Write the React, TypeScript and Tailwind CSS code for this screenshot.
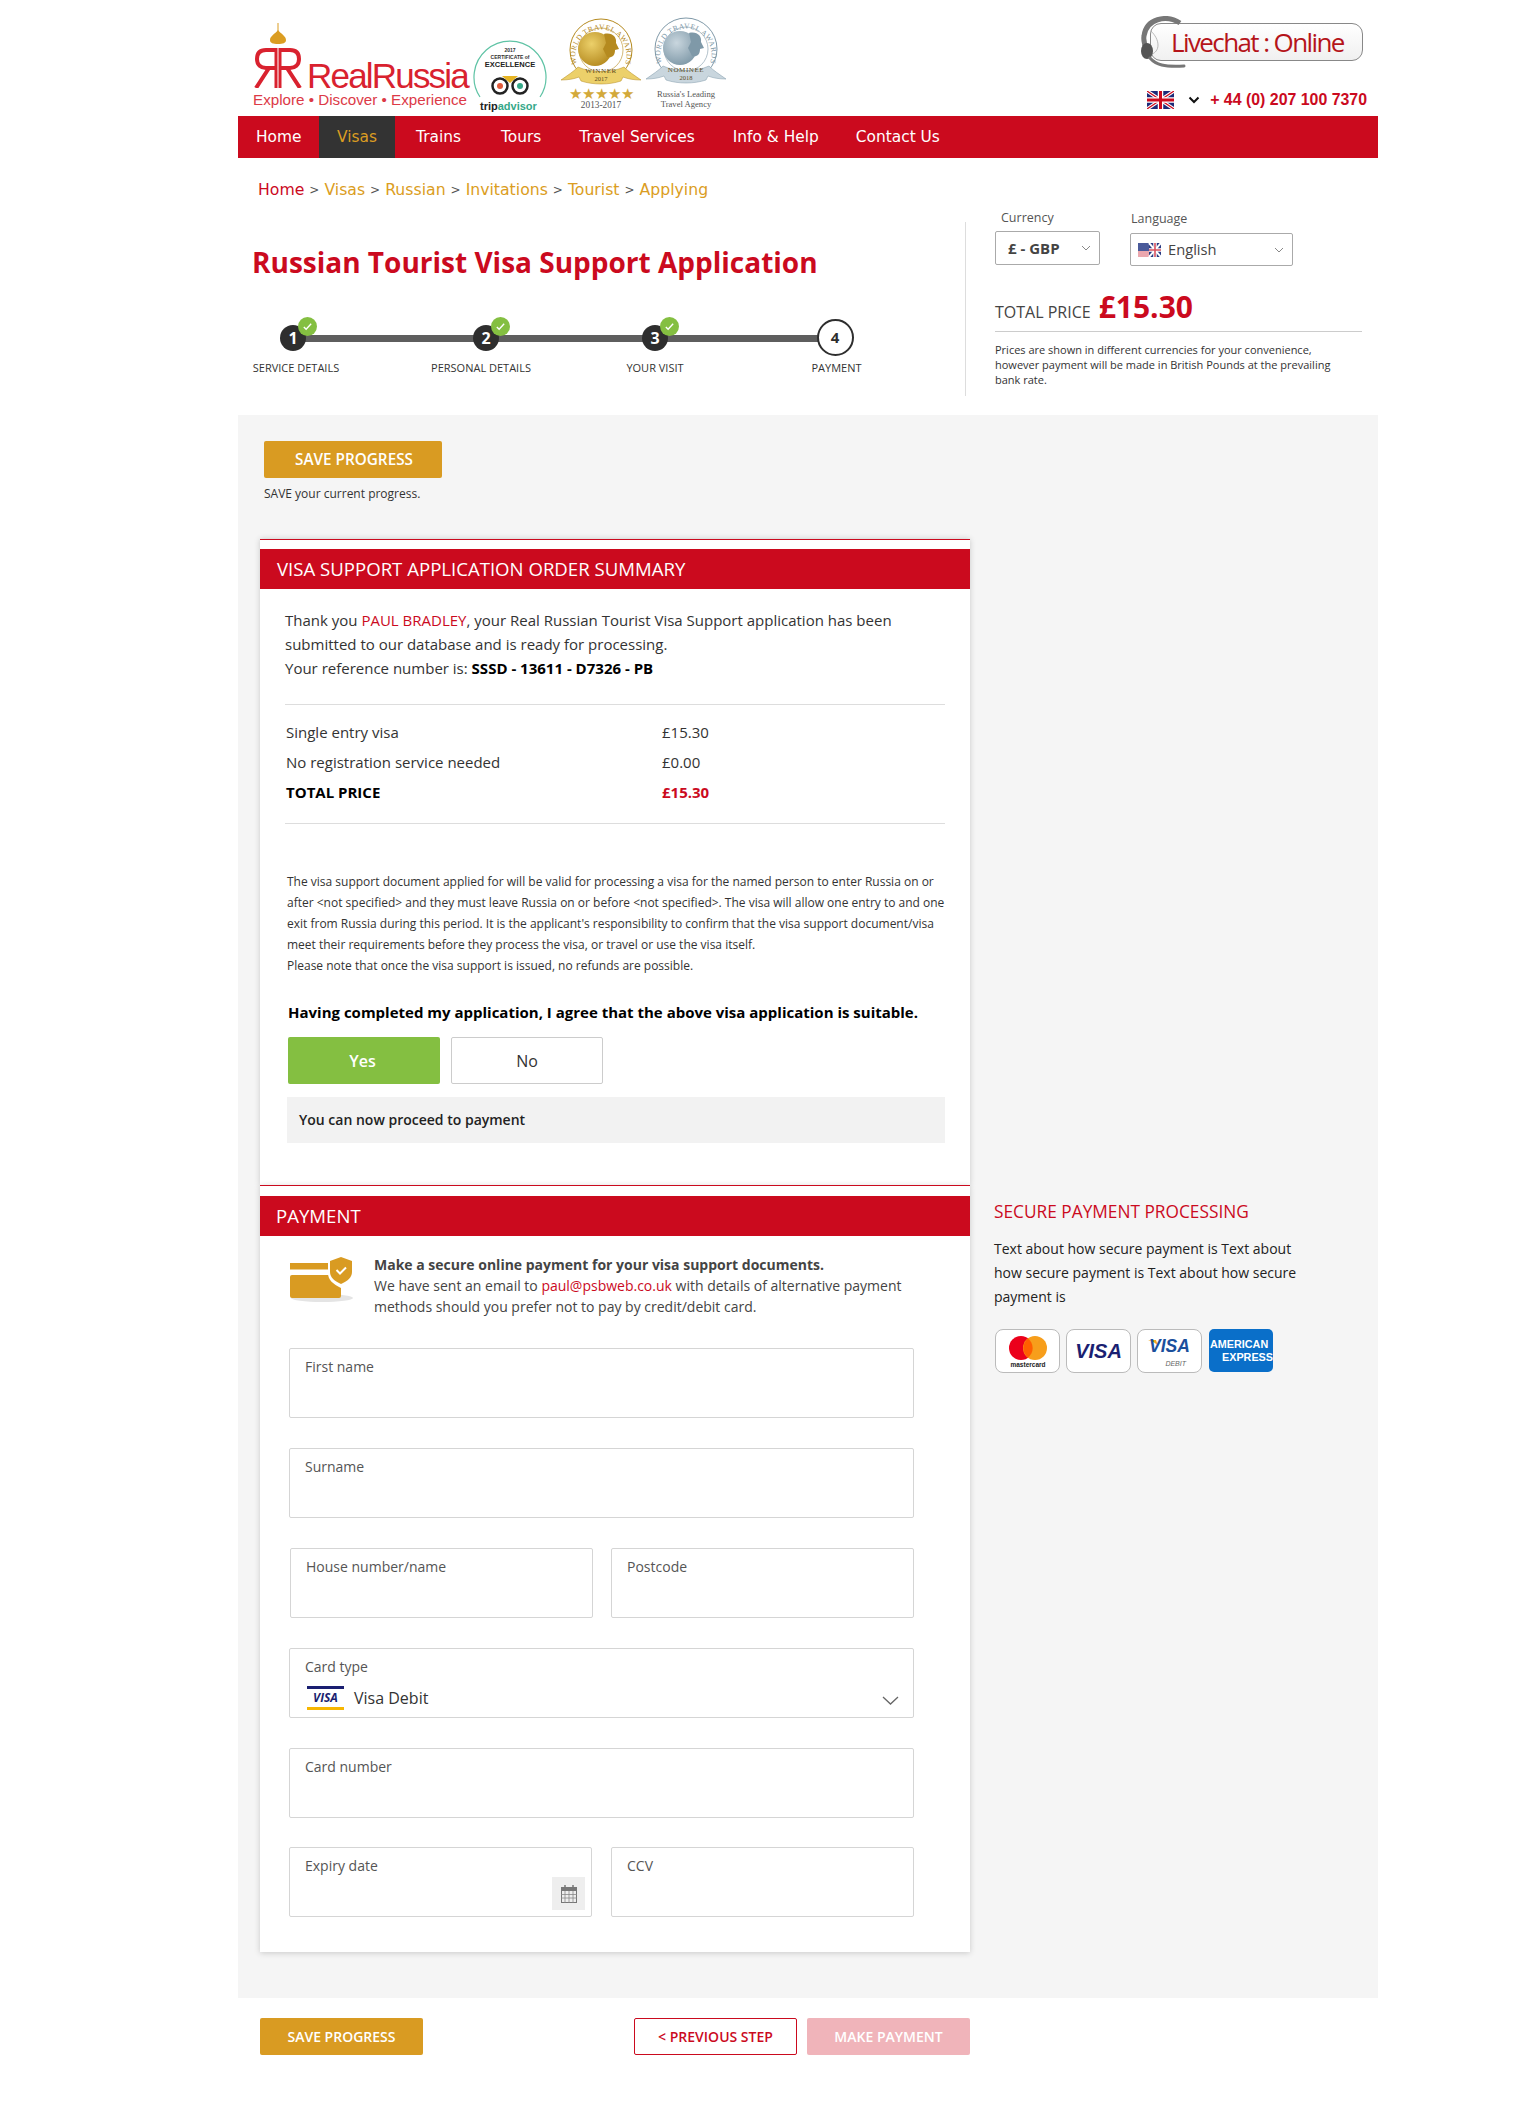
import type { ReactNode } from "react";

const Field = ({ label, className }: { label: string; className?: string }) => (
  <div className={"h-[70px] rounded-[2px] border border-[#d5d5d5] bg-white px-[15px] pt-[8px] text-[14px] leading-[20px] text-[#555] " + (className || "")}>
    {label}
  </div>
);

const Logo = () => (
  <div className="relative h-[110px] w-[216px]">
    <svg viewBox="0 0 50 65" className="absolute left-[1px] top-[23px] h-[65px] w-[50px]">
      <path d="M25 0v9" stroke="#db9d22" strokeWidth="1" />
      <path d="M25 7c3 4 8 6 8 10 0 3-3 4-8 4s-8-1-8-4c0-4 5-6 8-10z" fill="#db9d22" />
      <g fill="none" stroke="#d9222f" strokeWidth="4">
        <path d="M23 27H13C6 27 4 31 4 36c0 6 4 9 9 9h10" />
        <path d="M27 27h10c7 0 9 4 9 9 0 6-4 9-9 9H27" />
        <path d="M16 45L3 65M34 45l13 20" />
      </g>
      <path d="M23 25V65M27 25V65" stroke="#d9222f" strokeWidth="3" />
    </svg>
    <div className="absolute left-[55px] top-[57px] whitespace-nowrap font-['Liberation_Sans',sans-serif] text-[35px] leading-[38px] tracking-[-1.8px] text-[#d9222f]">RealRussia</div>
    <div className="absolute left-[1px] top-[91px] whitespace-nowrap font-['Liberation_Sans',sans-serif] text-[15.2px] leading-[17px] text-[#dc3a47]">Explore • Discover • Experience</div>
  </div>
);

const Tripadvisor = () => (
  <div className="relative h-[76px] w-[74px]">
    <svg viewBox="0 0 74 76" className="absolute inset-0">
      <path d="M7 58A36 36 0 1 1 67 58" fill="none" stroke="#5fc3a5" strokeWidth="1.2" />
      <circle cx="27" cy="47" r="7.5" fill="#fff" stroke="#222" strokeWidth="2.5" />
      <circle cx="47" cy="47" r="7.5" fill="#fff" stroke="#222" strokeWidth="2.5" />
      <circle cx="27" cy="47" r="3" fill="#e05a3a" />
      <circle cx="47" cy="47" r="3" fill="#35a888" />
      <path d="M29 37h16l-8 7z" fill="#e6b422" />
    </svg>
    <div className="absolute inset-x-0 top-[8px] text-center font-['Liberation_Sans',sans-serif] text-[5px] font-bold leading-[6px] text-[#333]">2017</div>
    <div className="absolute inset-x-0 top-[15px] text-center font-['Liberation_Sans',sans-serif] text-[5px] font-bold leading-[6px] text-[#333]">CERTIFICATE of</div>
    <div className="absolute inset-x-0 top-[21px] text-center font-['Liberation_Sans',sans-serif] text-[7.5px] font-bold leading-[9px] text-[#222]">EXCELLENCE</div>
    <div className="absolute left-[7px] top-[61px] font-['Liberation_Sans',sans-serif] text-[11px] font-bold leading-[13px] text-[#222]">trip<span className="text-[#35a888]">advisor</span></div>
  </div>
);

const Award = ({ id, word, year, c1, c2 }: { id: string; word: string; year: string; c1: string; c2: string }) => (
  <svg viewBox="0 0 80 70" className="h-[70px] w-[80px]">
    <defs>
      <radialGradient id={id} cx="40%" cy="35%" r="70%">
        <stop offset="0" stopColor={c1} />
        <stop offset="1" stopColor={c2} />
      </radialGradient>
      <path id={id + "-arc"} d="M18 50A25.5 25.5 0 1 1 62 50" />
    </defs>
    <circle cx="40" cy="32" r="31" fill="#fff" stroke={c2} strokeWidth="1" />
    <circle cx="40" cy="32" r="22" fill="#fff" stroke={c2} strokeWidth="0.6" />
    <text fontSize="7.5" letterSpacing="0.4" fontFamily="Liberation Serif, serif" fill={c2}>
      <textPath href={"#" + id + "-arc"} startOffset="50%" textAnchor="middle">WORLD TRAVEL AWARDS</textPath>
    </text>
    <circle cx="34" cy="31" r="17" fill={"url(#" + id + ")"} />
    <path d="M43 16c8-2 13 3 12 9l3 6-4 1c0 6-3 8-8 7l-4-8 3-6z" fill={c2} />
    <path d="M0 62c7-5 12-8 17-13 13 6 33 6 46 0 5 5 10 8 17 13-7 0-13-1-18-3l-2 4c-12 4-28 4-40 0l-2-4c-5 2-11 3-18 3z" fill={c1} stroke={c2} strokeWidth="0.5" />
    <text x="40" y="55" textAnchor="middle" fontSize="7" letterSpacing="0.6" fontFamily="Liberation Serif, serif" fill="#5a4a20">{word}</text>
    <text x="40" y="63" textAnchor="middle" fontSize="6.5" fontFamily="Liberation Serif, serif" fill="#5a4a20">{year}</text>
  </svg>
);

const Livechat = () => (
  <div className="relative h-[52px] w-[226px]">
    <div className="absolute left-[10px] top-[7px] flex h-[38px] w-[213px] items-center rounded-[11px] border border-[#888] bg-gradient-to-b from-white to-[#f0f0f0] pl-[20px] font-['Open_Sans',sans-serif] text-[26px] leading-none tracking-[-1.6px] text-[#b5141a]">
      Livechat : Online
    </div>
    <svg viewBox="0 0 46 52" className="absolute left-0 top-0 h-[52px] w-[46px]">
      <path d="M40 7C26-2 6 3 4 20c-1 6 1 10 3 14" fill="none" stroke="#777" strokeWidth="5" />
      <path d="M11 15c4 4 7 9 7 14s-3 8-6 9" fill="none" stroke="#aaa" strokeWidth="0.8" />
      <ellipse cx="7" cy="35" rx="6" ry="8" fill="#555" />
      <path d="M10 42c6 7 14 9 34 8" fill="none" stroke="#777" strokeWidth="3" strokeLinecap="round" />
    </svg>
  </div>
);

const UkFlag = () => (
  <svg viewBox="0 0 27 18" className="h-[18px] w-[27px]">
    <rect width="27" height="18" fill="#1c2a78" />
    <path d="M0 0l27 18M27 0L0 18" stroke="#fff" strokeWidth="3.4" />
    <path d="M0 0l27 18M27 0L0 18" stroke="#cc0a1e" strokeWidth="1.2" />
    <path d="M13.5 0v18M0 9h27" stroke="#fff" strokeWidth="5.5" />
    <path d="M13.5 0v18M0 9h27" stroke="#cc0a1e" strokeWidth="3" />
  </svg>
);

const MixedFlag = () => (
  <svg viewBox="0 0 23 14" className="h-[14px] w-[23px]">
    <rect width="23" height="14" fill="#fff" />
    <path d="M0 9h11M0 11h11M0 13h11" stroke="#d8505e" strokeWidth="1.2" />
    <path d="M0 1h11M0 3.5h11M0 6h11" stroke="#d8505e" strokeWidth="1.2" />
    <rect width="11" height="8" fill="#4a5a9a" />
    <rect x="11" width="12" height="14" fill="#2a3a82" />
    <path d="M11 0l12 14M23 0L11 14" stroke="#fff" strokeWidth="2" />
    <path d="M17 0v14M11 7h12" stroke="#fff" strokeWidth="3.5" />
    <path d="M17 0v14M11 7h12" stroke="#d8505e" strokeWidth="1.6" />
  </svg>
);

const Step = ({ n, label, left, labelShift, done }: { n: number; label: string; left: string; labelShift: string; done?: boolean }) => (
  <div className={left + " absolute top-0 w-[120px] -translate-x-1/2"}>
    <div className="relative mx-auto h-[37px] w-[28px]">
      {done ? (
        <>
          <div className="absolute left-0 top-[8px] flex h-[26px] w-[26px] items-center justify-center rounded-full bg-[#2e2e2e] text-[16px] font-bold text-white">{n}</div>
          <div className="absolute left-[18px] top-0 flex h-[19px] w-[19px] items-center justify-center rounded-full bg-[#84bf41]">
            <svg viewBox="0 0 12 12" className="h-[11px] w-[11px]"><path d="M2 6.5l2.5 2.5L10 3" fill="none" stroke="#fff" strokeWidth="1.5" /></svg>
          </div>
        </>
      ) : (
        <div className="absolute left-[-5px] top-[2px] flex h-[37px] w-[37px] items-center justify-center rounded-full border-2 border-[#2e2e2e] bg-white text-[15px] font-bold text-[#2e2e2e]">{n}</div>
      )}
    </div>
    <div className={labelShift + " relative mt-[6px] text-center text-[11px] leading-[15px] text-[#333]"}>{label}</div>
  </div>
);

const Row = ({ a, b, bold }: { a: string; b: string; bold?: boolean }) => (
  <div className="flex h-[30px] items-center">
    <div className={"w-[376px] " + (bold ? "font-bold text-black" : "")}>{a}</div>
    <div className={bold ? "font-bold text-[#cb0a1e]" : ""}>{b}</div>
  </div>
);

const PayCard = ({ children, className }: { children: ReactNode; className?: string }) => (
  <div className={"relative h-[44px] w-[65px] overflow-hidden rounded-[8px] border border-[#bbb] bg-white " + (className || "")}>{children}</div>
);

const Sep = () => <span className="mx-[5px] text-[12px] text-[#555]">&gt;</span>;

export default function App() {
  return (
    <div className="relative h-[2104px] bg-white font-['Open_Sans',sans-serif]">
      <div className="ml-[238px] w-[1140px]">
        {/* header */}
        <div className="flex h-[116px] items-start justify-between">
          <div className="flex">
            <div className="ml-[14px]"><Logo /></div>
            <div className="ml-[5px] mt-[39px]"><Tripadvisor /></div>
            <div className="ml-[14px] mt-[18px] flex flex-col items-center">
              <Award id="gold" word="WINNER" year="2017" c1="#ecd06a" c2="#b58a1f" />
              <div className="text-[14.5px] leading-[12px] text-[#d3a93a]">★★★★★</div>
              <div className="font-['Liberation_Serif',serif] text-[9.3px] leading-[10px] text-[#555]">2013-2017</div>
            </div>
            <div className="ml-[5px] mt-[17px] flex flex-col items-center">
              <Award id="silver" word="NOMINEE" year="2018" c1="#c9d6de" c2="#7f99a8" />
              <div className="mt-[2px] text-center font-['Liberation_Serif',serif] text-[8.6px] leading-[10px] text-[#555]">Russia's Leading<br />Travel Agency</div>
            </div>
          </div>
          <div className="mr-[11px] flex flex-col items-end">
            <div className="mr-[1px] mt-[16px]"><Livechat /></div>
            <div className="mt-[23px] flex items-center">
              <UkFlag />
              <svg viewBox="0 0 12 8" className="ml-[14px] h-[8px] w-[12px]"><path d="M1.5 1.5L6 6l4.5-4.5" fill="none" stroke="#111" strokeWidth="2" /></svg>
              <div className="ml-[10px] font-['Liberation_Sans',sans-serif] text-[15.9px] font-bold leading-[18px] text-[#cb0a1e]">+ 44 (0) 207 100 7370</div>
            </div>
          </div>
        </div>

        {/* nav */}
        <div className="flex h-[42px] items-center bg-[#cb0a1e] font-['DejaVu_Sans',sans-serif] text-[15.4px] text-white">
          <div className="w-[81px] pl-[18px] pt-[2px]">Home</div>
          <div className="flex h-full w-[76px] items-center justify-center bg-[#333] pt-[2px] text-[#db9d22]">Visas</div>
          <div className="pl-[21px] pt-[2px]">Trains</div>
          <div className="pl-[40px] pt-[2px]">Tours</div>
          <div className="pl-[38px] pt-[2px]">Travel Services</div>
          <div className="pl-[38px] pt-[2px]">Info &amp; Help</div>
          <div className="pl-[37px] pt-[2px]">Contact Us</div>
        </div>

        {/* title area */}
        <div className="relative flex h-[257px]">
          <div className="w-[727px] pl-[14px]">
            <div className="mt-[21px] flex items-center pl-[6px] font-['DejaVu_Sans',sans-serif] text-[15.7px] leading-[22px] text-[#db9d22]">
              <span className="text-[#cb0a1e]">Home</span>
              <Sep />Visas
              <Sep />Russian
              <Sep />Invitations
              <Sep />Tourist
              <Sep />Applying
            </div>
            <h1 className="mt-[42px] text-[28px] font-bold leading-[38px] text-[#cb0a1e]">Russian Tourist Visa Support Application</h1>
            <div className="relative mt-[36px] h-[60px] w-[640px]">
              <div className="absolute left-[41px] right-[57px] top-[18px] h-[7px] bg-[#5e5e5e]" />
              <Step n={1} label="SERVICE DETAILS" left="left-[42px]" labelShift="left-[2px]" done />
              <Step n={2} label="PERSONAL DETAILS" left="left-[235px]" labelShift="left-[-6px]" done />
              <Step n={3} label="YOUR VISIT" left="left-[404px]" labelShift="left-[-1px]" done />
              <Step n={4} label="PAYMENT" left="left-[583.5px]" labelShift="left-[1px]" />
            </div>
          </div>
          <div className="mt-[64px] h-[174px] border-l border-[#ddd]" />
          <div className="w-[402px] pl-[29px] text-[#444]">
            <div className="mt-[51px] flex">
              <div className="mr-[30px]">
                <div className="pl-[6px] text-[12.5px] leading-[17px] text-[#555]">Currency</div>
                <div className="mt-[5px] flex h-[34px] w-[105px] items-center justify-between rounded-[2px] border border-[#aaa] pl-[12px] pr-[8px] text-[15px] font-bold">
                  £ - GBP
                  <svg viewBox="0 0 10 6" className="h-[6px] w-[10px]"><path d="M1 1l4 4 4-4" fill="none" stroke="#888" strokeWidth="1" /></svg>
                </div>
              </div>
              <div className="mt-[1px]">
                <div className="pl-[1px] text-[12.5px] leading-[17px] text-[#555]">Language</div>
                <div className="mt-[6px] flex h-[33px] w-[163px] items-center rounded-[2px] border border-[#aaa] pl-[7px] pr-[8px] text-[14.7px]">
                  <MixedFlag />
                  <span className="ml-[7px]">English</span>
                  <svg viewBox="0 0 10 6" className="ml-auto h-[6px] w-[10px]"><path d="M1 1l4 4 4-4" fill="none" stroke="#888" strokeWidth="1" /></svg>
                </div>
              </div>
            </div>
            <div className="mt-[23px] flex w-[367px] items-baseline border-b border-[#ccc] pb-[1px] leading-[36px]">
              <span className="text-[16px] text-[#444]">TOTAL PRICE</span>
              <span className="ml-[8px] text-[30px] font-bold text-[#cb0a1e]">£15.30</span>
            </div>
            <p className="mt-[10px] text-[11px] leading-[15px] text-[#333]">
              Prices are shown in different currencies for your convenience,<br />
              however payment will be made in British Pounds at the prevailing<br />
              bank rate.
            </p>
          </div>
        </div>

        {/* main grey panel */}
        <div className="flex h-[1583px] bg-[#f5f5f5]">
          <div className="w-[738px] pl-[22px]">
            <div className="ml-[4px] mt-[26px] flex h-[37px] w-[178px] items-center justify-center rounded-[2px] bg-[#d99b22] pl-[2px] text-[15.3px] font-semibold text-white">SAVE PROGRESS</div>
            <div className="ml-[4px] mt-[7px] text-[12px] leading-[17px] text-[#333]">SAVE your current progress.</div>

            <div className="mt-[37px] w-[710px] border-t border-[#cb0a1e] bg-white pb-[42px] shadow-[0_0_6px_rgba(0,0,0,0.18)]">
              <div className="mt-[9px] flex h-[40px] items-center bg-[#cb0a1e] pl-[17px] text-[18.6px] text-white">VISA SUPPORT APPLICATION ORDER SUMMARY</div>
              <div className="px-[25px]">
                <p className="mt-[19px] text-[15px] leading-[24px] text-[#333]">
                  Thank you <span className="text-[#cb0a1e]">PAUL BRADLEY</span>, your Real Russian Tourist Visa Support application has been<br />
                  submitted to our database and is ready for processing.<br />
                  Your reference number is: <b className="text-black">SSSD - 13611 - D7326 - PB</b>
                </p>
                <div className="mt-[24px] border-y border-[#ddd] pb-[16px] pl-[1px] pt-[12px] text-[15px] text-[#333]">
                  <Row a="Single entry visa" b="£15.30" />
                  <Row a="No registration service needed" b="£0.00" />
                  <Row a="TOTAL PRICE" b="£15.30" bold />
                </div>
                <p className="ml-[2px] mt-[47px] text-[12px] leading-[21px] text-[#333]">
                  The visa support document applied for will be valid for processing a visa for the named person to enter Russia on or<br />
                  after &lt;not specified&gt; and they must leave Russia on or before &lt;not specified&gt;. The visa will allow one entry to and one<br />
                  exit from Russia during this period. It is the applicant's responsibility to confirm that the visa support document/visa<br />
                  meet their requirements before they process the visa, or travel or use the visa itself.<br />
                  Please note that once the visa support is issued, no refunds are possible.
                </p>
                <div className="ml-[3px] mt-[24px] text-[15px] font-bold leading-[24px] text-black">Having completed my application, I agree that the above visa application is suitable.</div>
                <div className="ml-[3px] mt-[13px] flex gap-[11px] text-[16px]">
                  <div className="flex h-[47px] w-[152px] items-center justify-center rounded-[2px] bg-[#84bf41] pr-[3px] font-semibold text-white">Yes</div>
                  <div className="flex h-[47px] w-[152px] items-center justify-center rounded-[2px] border border-[#ccc] bg-white text-[#333]">No</div>
                </div>
                <div className="ml-[2px] mt-[13px] flex h-[46px] items-center bg-[#f2f2f2] pb-[2px] pl-[12px] text-[14px] font-semibold text-[#222]">You can now proceed to payment</div>
              </div>
            </div>

            <div className="w-[710px] border-t border-[#cb0a1e] bg-white pb-[35px] shadow-[0_1px_6px_rgba(0,0,0,0.18)]">
              <div className="mt-[10px] flex h-[40px] items-center bg-[#cb0a1e] pl-[16px] text-[18.6px] text-white">PAYMENT</div>
              <div className="pl-[29px]">
                <div className="mt-[18px] flex">
                  <svg viewBox="0 0 63 45" className="ml-[1px] mt-[3px] h-[45px] w-[63px] shrink-0">
                    <ellipse cx="32" cy="41" rx="31" ry="4" fill="#e4e4e4" />
                    <rect x="0" y="6" width="38" height="6.5" fill="#d99b22" />
                    <rect x="0" y="18" width="51" height="23" rx="2" fill="#d99b22" />
                    <path d="M51 -2l13 5v13c0 7-5 11-13 15-8-4-13-8-13-15V3z" fill="#fff" />
                    <path d="M51 0l11 4v11c0 5-4 9-11 12-7-3-11-7-11-12V4z" fill="#d99b22" />
                    <path d="M46.5 13l3.5 3.5 6-6" fill="none" stroke="#fff" strokeWidth="2" />
                  </svg>
                  <div className="ml-[21px] text-[14px] leading-[21px] text-[#444]">
                    <b>Make a secure online payment for your visa support documents.</b><br />
                    We have sent an email to <span className="text-[#cb0a1e]">paul@psbweb.co.uk</span> with details of alternative payment<br />
                    methods should you prefer not to pay by credit/debit card.
                  </div>
                </div>
                <div className="mt-[31px] w-[625px]">
                  <Field label="First name" />
                  <Field label="Surname" className="mt-[30px]" />
                  <div className="mt-[30px] flex justify-between">
                    <Field label="House number/name" className="ml-[1px] w-[303px]" />
                    <Field label="Postcode" className="w-[303px]" />
                  </div>
                  <div className="relative mt-[30px] h-[70px] rounded-[2px] border border-[#d5d5d5] bg-white px-[15px] pt-[8px] text-[14px] leading-[20px] text-[#555]">
                    Card type
                    <div className="ml-[2px] mt-[9px] flex items-center">
                      <div className="flex h-[24px] w-[37px] flex-col justify-between">
                        <div className="h-[3px] bg-[#1a1f71]" />
                        <div className="text-center text-[12px] font-bold italic leading-[14px] text-[#1a1f71]">VISA</div>
                        <div className="h-[3px] bg-[#f7b600]" />
                      </div>
                      <span className="ml-[10px] text-[16px] leading-[22px] text-[#333]">Visa Debit</span>
                    </div>
                    <svg viewBox="0 0 17 9" className="absolute right-[14px] top-[47px] h-[9px] w-[17px]"><path d="M1 1l7.5 7L16 1" fill="none" stroke="#666" strokeWidth="1.3" /></svg>
                  </div>
                  <Field label="Card number" className="mt-[30px]" />
                  <div className="mt-[29px] flex justify-between">
                    <div className="relative h-[70px] w-[303px] rounded-[2px] border border-[#d5d5d5] bg-white px-[15px] pt-[8px] text-[14px] leading-[20px] text-[#555]">
                      Expiry date
                      <div className="absolute bottom-[6px] right-[6px] flex h-[33px] w-[33px] items-center justify-center bg-[#eee]">
                        <svg viewBox="0 0 16 18" className="h-[18px] w-[16px]">
                          <rect x="0.5" y="2.5" width="15" height="15" fill="none" stroke="#777" />
                          <rect x="0" y="2" width="16" height="4" fill="#777" />
                          <path d="M4 0v3M12 0v3" stroke="#777" strokeWidth="1.5" />
                          <path d="M0 9.5h16M0 13h16M4 6v12M8 6v12M12 6v12" stroke="#888" strokeWidth="0.8" />
                        </svg>
                      </div>
                    </div>
                    <Field label="CCV" className="w-[303px]" />
                  </div>
                </div>
              </div>
            </div>
          </div>

          {/* side text */}
          <div className="w-[320px] pl-[18px] pt-[785px]">
            <div className="whitespace-nowrap text-[17.3px] font-medium leading-[24px] text-[#cb0a1e]">SECURE PAYMENT PROCESSING</div>
            <p className="mt-[13px] w-[320px] text-[14px] leading-[24px] text-[#222]">
              Text about how secure payment is Text about<br />
              how secure payment is Text about how secure<br />
              payment is
            </p>
            <div className="ml-[1px] mt-[20px] flex gap-[6px]">
              <PayCard>
                <svg viewBox="0 0 63 42" className="absolute inset-0 h-[42px] w-[63px]">
                  <circle cx="25" cy="18" r="12" fill="#eb001b" />
                  <circle cx="39" cy="18" r="12" fill="#f79e1b" />
                  <path d="M32 8.5a12 12 0 0 1 0 19a12 12 0 0 1 0-19z" fill="#ff5f00" />
                  <text x="32" y="37" textAnchor="middle" fontSize="6.5" fontWeight="700" fontFamily="Liberation Sans, sans-serif" fill="#222">mastercard</text>
                </svg>
              </PayCard>
              <PayCard className="flex items-center justify-center">
                <span className="font-['Liberation_Sans',sans-serif] text-[20px] font-bold italic text-[#1a1f71]">VISA</span>
              </PayCard>
              <PayCard>
                <svg viewBox="0 0 10 6" className="absolute left-[10px] top-[10px] h-[6px] w-[10px]"><path d="M0 0h8l2 6C8 3 4 1 0 0z" fill="#f2a81d" /></svg>
                <div className="absolute inset-x-0 top-[6px] text-center font-['Liberation_Sans',sans-serif] text-[17.5px] font-bold italic leading-[20px] text-[#1a4f9c]">VISA</div>
                <div className="absolute right-[15px] top-[29px] font-['Liberation_Sans',sans-serif] text-[7px] italic leading-[9px] text-[#666]">DEBIT</div>
              </PayCard>
              <div className="ml-[1px] flex h-[43px] w-[64px] flex-col items-end justify-center overflow-hidden rounded-[5px] bg-[#0a6fc9] font-['Liberation_Sans',sans-serif] text-[10.8px] font-bold leading-[13px] text-white">
                <span className="w-full pl-[1px]">AMERICAN</span>
                <span>EXPRESS</span>
              </div>
            </div>
          </div>
        </div>

        {/* bottom buttons */}
        <div className="ml-[22px] mt-[20px] flex w-[710px] text-[14px] font-semibold">
          <div className="flex h-[37px] w-[163px] items-center justify-center rounded-[2px] bg-[#d99b22] text-white">SAVE PROGRESS</div>
          <div className="ml-auto flex h-[37px] w-[163px] items-center justify-center rounded-[2px] border border-[#cb0a1e] text-[#cb0a1e]">&lt; PREVIOUS STEP</div>
          <div className="ml-[10px] flex h-[37px] w-[163px] items-center justify-center rounded-[2px] bg-[#f0b4ba] text-white">MAKE PAYMENT</div>
        </div>
      </div>
    </div>
  );
}
